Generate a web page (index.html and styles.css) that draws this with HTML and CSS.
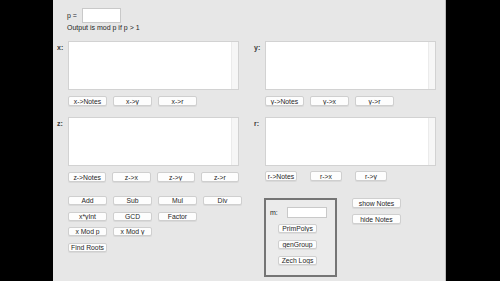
FILE: index.html
```html
<!DOCTYPE html>
<html>
<head>
<meta charset="utf-8">
<link rel="stylesheet" href="styles.css">
</head>
<body>
<div class="panel">
  <div class="header">
    <div class="prow"><span class="plabel">p =</span><div class="input pinput"></div></div>
    <div class="note">Output is mod p if p &gt; 1</div>
  </div>

  <div class="pair">
    <div class="field left">
      <span class="lbl">x:</span>
      <div class="body">
        <div class="area"><div class="fill"></div><div class="strip"></div></div>
        <div class="btns"><span class="btn">x-&gt;Notes</span><span class="btn">x-&gt;y</span><span class="btn">x-&gt;r</span></div>
      </div>
    </div>
    <div class="field right">
      <span class="lbl">y:</span>
      <div class="body">
        <div class="area"><div class="fill"></div><div class="strip"></div></div>
        <div class="btns"><span class="btn">y-&gt;Notes</span><span class="btn">y-&gt;x</span><span class="btn">y-&gt;r</span></div>
      </div>
    </div>
  </div>

  <div class="pair second">
    <div class="field left">
      <span class="lbl">z:</span>
      <div class="body">
        <div class="area"><div class="fill"></div><div class="strip"></div></div>
        <div class="btns"><span class="btn">z-&gt;Notes</span><span class="btn">z-&gt;x</span><span class="btn">z-&gt;y</span><span class="btn">z-&gt;r</span></div>
      </div>
    </div>
    <div class="field right">
      <span class="lbl">r:</span>
      <div class="body">
        <div class="area"><div class="fill"></div><div class="strip"></div></div>
        <div class="btns rbtns"><span class="btn narrow">r-&gt;Notes</span><span class="btn narrow">r-&gt;x</span><span class="btn narrow">r-&gt;y</span></div>
      </div>
    </div>
  </div>

  <div class="bottom">
    <div class="ops">
      <span class="btn sm">Add</span><span class="btn sm">Sub</span><span class="btn sm">Mul</span><span class="btn sm">Div</span>
      <span class="btn sm">x*yInt</span><span class="btn sm">GCD</span><span class="btn sm">Factor</span><span></span>
      <span class="btn sm">x Mod p</span><span class="btn sm">x Mod y</span><span></span><span></span>
      <span class="btn sm">Find Roots</span>
    </div>
    <div class="rightside">
      <div class="box">
        <div class="mrow"><span class="mlabel">m:</span><div class="input minput"></div></div>
        <span class="btn sm boxbtn">PrimPolys</span>
        <span class="btn sm boxbtn">genGroup</span>
        <span class="btn sm boxbtn">Zech Logs</span>
      </div>
      <div class="notes">
        <span class="btn wide">show Notes</span>
        <span class="btn wide">hide Notes</span>
      </div>
    </div>
  </div>
</div>
</body>
</html>
```

FILE: styles.css
```css
html, body {
  margin: 0;
  padding: 0;
  background: #000;
  width: 500px;
  height: 281px;
  overflow: hidden;
}

.panel {
  margin-left: 53px;
  width: 393px;
  height: 281px;
  background: #e7e7e7;
  border-right: 1px solid #bdbdbd;
  padding: 8px 0 0 4px;
  box-sizing: border-box;
  font-family: "Liberation Sans", Arial, sans-serif;
  font-size: 7px;
  color: #1f1f1f;
}

.header {
  margin-left: 10px;
}

.prow {
  display: flex;
  align-items: center;
  height: 15px;
}

.plabel {
  width: 15px;
}

.input {
  background: #fff;
  border: 1px solid #c9c9c9;
  box-sizing: border-box;
}

.pinput {
  width: 39px;
  height: 15px;
}

.note {
  line-height: 10px;
}

.pair {
  display: flex;
  gap: 15px;
  margin-top: 8px;
}

.pair.second {
  margin-top: 11px;
}

.field {
  display: flex;
}

.lbl {
  width: 11px;
  line-height: 10px;
  margin-top: 2px;
  font-weight: bold;
  color: #3a3a3a;
}

.body {
  width: 171px;
}

.area {
  height: 49px;
  background: #fff;
  border: 1px solid #d2d2d2;
  box-sizing: border-box;
  display: flex;
}

.fill {
  flex: 1;
}

.strip {
  width: 6px;
  background: #f6f6f6;
  border-left: 1px solid #ebebeb;
}

.btns {
  display: flex;
  gap: 6px;
  margin-top: 6px;
}

.rbtns {
  gap: 13px;
  margin-top: 5px;
}

.btn {
  display: block;
  width: 39px;
  height: 10px;
  line-height: 10px;
  background: #fdfdfd;
  border: 1px solid #cfcfcf;
  border-radius: 2px;
  box-sizing: border-box;
  box-shadow: 0 1px 0 rgba(0, 0, 0, 0.06);
  text-align: center;
  white-space: nowrap;
  overflow: hidden;
  font-size: 6.8px;
  color: #262626;
}

.btn.narrow {
  width: 32px;
}

.btn.sm {
  height: 9px;
  line-height: 8px;
}

.btn.wide {
  width: 49px;
}

.bottom {
  display: flex;
  margin-top: 14px;
}

.ops {
  margin-left: 11px;
  width: 186px;
  display: grid;
  grid-template-columns: repeat(4, 39px);
  column-gap: 6px;
  row-gap: 6.5px;
  align-content: start;
}

.rightside {
  margin-left: 10px;
  margin-top: 2px;
  display: flex;
  gap: 15px;
}

.box {
  width: 73px;
  height: 79px;
  border: 2px solid #757575;
  box-sizing: border-box;
  background: #ebebeb;
  padding: 7px 0 0 4px;
}

.mrow {
  display: flex;
  align-items: center;
  height: 11px;
}

.mlabel {
  width: 17px;
}

.minput {
  width: 40px;
  height: 11px;
}

.boxbtn {
  margin-left: 8px;
  margin-top: 6px;
}

.box .boxbtn + .boxbtn {
  margin-top: 7px;
}

.notes {
  display: flex;
  flex-direction: column;
  gap: 6px;
}
```
